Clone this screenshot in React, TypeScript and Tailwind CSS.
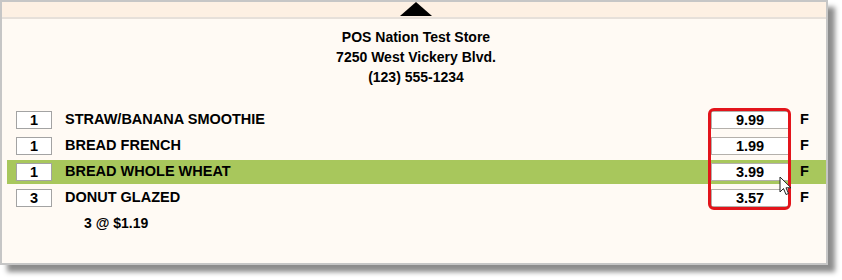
import React from 'react';

const items = [
  { qty: 1, name: 'STRAW/BANANA SMOOTHIE', price: '9.99', active: false },
  { qty: 1, name: 'BREAD FRENCH', price: '1.99', active: false },
  { qty: 1, name: 'BREAD WHOLE WHEAT', price: '3.99', active: true },
  { qty: 3, name: 'DONUT GLAZED', price: '3.57', active: false },
];

function Cursor() {
  return (
    <svg width="14" height="20" viewBox="0 0 14 20" className="absolute left-[772px] top-[68px]">
      <path d="M1 1 L1 16 L4.5 12.5 L7 18.5 L9.5 17.5 L7 11.8 L12 11.8 Z" fill="#fff" stroke="#222" strokeWidth="1" strokeLinejoin="round" />
    </svg>
  );
}

export default function App() {
  return (
    <div className="w-[842px] h-[280px] bg-white font-['Liberation_Sans',Arial,sans-serif] text-black">
      <div className="w-[828px] h-[265px] border-2 border-[#c6c6c6] bg-[#fffaf4] shadow-[7px_7px_5px_rgba(0,0,0,0.45)] flex flex-col">
        {/* top strip with scroll arrow */}
        <div className="h-[17px] bg-[#fdf0e3] border-b-2 border-[#e6e0da] flex justify-center items-start">
          <svg width="32" height="14" viewBox="0 0 32 14" className="ml-[4px]">
            <polygon points="16,0 32,14 0,14" fill="#000" />
          </svg>
        </div>

        {/* store header */}
        <div className="pt-[8px] text-center font-bold text-[14px] leading-[20px] ml-[4px]">
          <div>POS Nation Test Store</div>
          <div>7250 West Vickery Blvd.</div>
          <div>(123) 555-1234</div>
        </div>

        {/* item lines */}
        <div className="relative mt-[21px] ml-[5px]">
          {items.map((it, i) => (
            <div
              key={i}
              className={`h-[24px] mb-[2px] flex items-center pl-[9px] font-bold text-[14.5px] ${it.active ? 'bg-[#a8c75c]' : ''}`}
            >
              <div className="w-[36px] h-[18px] bg-white border border-[#a3a3a3] flex items-center justify-center leading-none">
                {it.qty}
              </div>
              <div className="ml-[13px] w-[646px]">{it.name}</div>
              <div className="w-[78px] h-[18px] bg-white border border-[#b4b0ab] flex items-center justify-center leading-none">
                {it.price}
              </div>
              <div className="ml-[11px]">F</div>
            </div>
          ))}
          <div className="pl-[77px] pt-[3px] font-bold text-[14px] leading-[16px]">3 @ $1.19</div>

          {/* highlight around prices */}
          <div className="absolute left-[701px] top-[0px] w-[83px] h-[102px] border-[3px] border-[#e3141b] rounded-[6px]"></div>
          <Cursor />
        </div>
      </div>
    </div>
  );
}
